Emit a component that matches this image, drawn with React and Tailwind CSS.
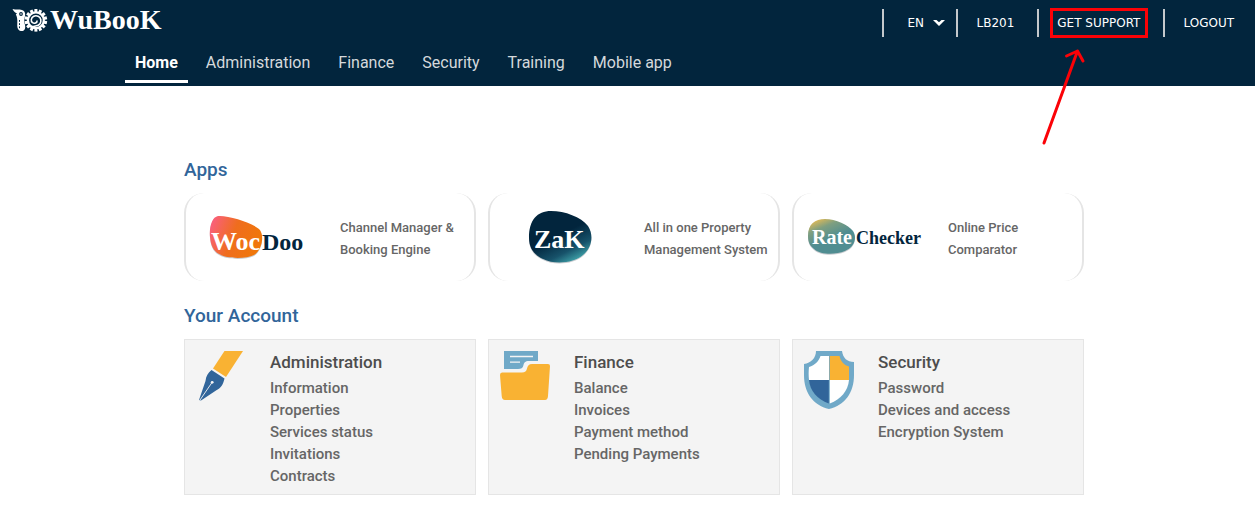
const NAV = ["Home", "Administration", "Finance", "Security", "Training", "Mobile app"];

const SERIF = "font-['Liberation_Serif',serif] font-bold";

function SnakeMark() {
  const teeth = Array.from({ length: 14 }, (_, i) => i * (360 / 14));
  return (
    <svg className="h-6 w-9 shrink-0" viewBox="0 0 36 24" fill="none" aria-hidden="true">
      <path d="M0.500 1 C4 2 7 1 10 2 C13 3 13.800 6 12.800 9 C12 12 12.200 14 13 17 C14 21 12 23.500 9 23 C5.500 22.500 5 19 5.300 15 C5.500 11 5 8.500 3.800 6.500 L5 5.500 C3 4.500 1.500 3 0.500 1Z" fill="#fff" />
      <circle cx="9" cy="6" r="1.900" fill="#02253d" />
      <circle cx="9" cy="6" r="0.800" fill="#fff" />
      <path d="M7.500 12v8.500" stroke="#02253d" strokeWidth="1" strokeDasharray="1.800 1.400" />
      <g fill="#fff">
        {teeth.map((a) => (
          <rect key={a} x="22.400" y="1" width="3" height="3.500" transform={`rotate(${a} 23.900 12.300)`} />
        ))}
      </g>
      <circle cx="23.900" cy="12.300" r="7.900" stroke="#fff" strokeWidth="2.200" />
      <path d="M15.500 17.500 C18 19 22 18.500 23.500 18 C28 17.500 29.300 14.500 28.800 11.500 C28.200 8.500 24.500 7 21.800 8.300 C19 9.700 18.500 13 20.500 14.700 C22.300 16 25.300 15 25.100 12.500" stroke="#fff" strokeWidth="1.600" />
    </svg>
  );
}

function WoodooLogo() {
  return (
    <svg className="h-13 w-24" viewBox="0 0 96 52" role="img" aria-label="WooDoo">
      <defs>
        <linearGradient id="woo" x1="0" y1="0.300" x2="1" y2="0.600">
          <stop offset="0" stopColor="#f9607a" />
          <stop offset="0.450" stopColor="#ef6d1e" />
          <stop offset="1" stopColor="#f07808" />
        </linearGradient>
      </defs>
      <path d="M1 27 C0 17 3 7 9 6 C18 5 42 12 50 19 C56 25 53 40 45 45 C37 49 18 49 10 44 C4 41 1.500 34 1 27Z" fill="#c9ccd0" />
      <path d="M1 26 C0 16 3 6 9 5 C18 4 42 11 50 18 C56 24 53 39 45 44 C37 48 18 48 10 43 C4 40 1.500 33 1 26Z" fill="url(#woo)" />
      <text x="2" y="39" fontSize="26" fill="#fff" className={SERIF}>Woc</text>
      <text x="53" y="39" fontSize="24" fill="#02253d" className={SERIF}>Doo</text>
    </svg>
  );
}

function ZakLogo() {
  return (
    <svg className="h-14 w-17" viewBox="0 0 68 56" role="img" aria-label="ZaK">
      <defs>
        <linearGradient id="zak" x1="0.300" y1="0.200" x2="0.800" y2="1">
          <stop offset="0.350" stopColor="#02253d" />
          <stop offset="0.700" stopColor="#17526a" />
          <stop offset="1" stopColor="#48b5b8" />
        </linearGradient>
      </defs>
      <path d="M2 30 C2 12 10 3 24 3 C38 3 54 9 61 18 C67 27 65 40 56 47 C47 55 28 57 16 51 C7 47 2 40 2 30Z" fill="#c9ccd0" />
      <path d="M2 29 C2 11 10 2 24 2 C38 2 54 8 61 17 C67 26 65 39 56 46 C47 54 28 56 16 50 C7 46 2 39 2 29Z" fill="url(#zak)" />
      <text x="7" y="39" fontSize="26" fill="#fff" className={SERIF}>ZaK</text>
    </svg>
  );
}

function RateLogo() {
  return (
    <svg className="h-10 w-[116px]" viewBox="0 0 116 40" role="img" aria-label="RateChecker">
      <defs>
        <linearGradient id="rate" x1="0.100" y1="0" x2="0.450" y2="0.600">
          <stop offset="0" stopColor="#f5c04e" />
          <stop offset="0.450" stopColor="#7f9f80" />
          <stop offset="1" stopColor="#508d91" />
        </linearGradient>
      </defs>
      <path d="M1 20 C1 8 8 3 18 3 C29 3 41 9 46 15 C51 23 46 32 38 35 C28 39 14 39 7 33 C3 30 1 26 1 20Z" fill="#c9ccd0" />
      <path d="M1 19 C1 7 8 2 18 2 C29 2 41 8 46 14 C51 22 46 31 38 34 C28 38 14 38 7 32 C3 29 1 25 1 19Z" fill="url(#rate)" />
      <text x="5" y="27" fontSize="20" fill="#fff" className={SERIF}>Rate</text>
      <text x="49" y="27" fontSize="18" fill="#02253d" className={SERIF}>Checker</text>
    </svg>
  );
}

function PenIcon() {
  return (
    <svg className="h-13 w-13" viewBox="0 0 52 52" aria-hidden="true">
      <path d="M29.500 1 H48 L31 27 L18 18.500Z" fill="#f9b233" />
      <path d="M16.500 20 L29.500 28.500 C28 35 26 38 21 40.500 L6 50.500 L4 50 L10.500 31 C11 26 13 23 16.500 20Z" fill="#31659a" />
      <path d="M5 50 L17 32.500" stroke="#f4f4f4" strokeWidth="0.900" />
      <circle cx="17.200" cy="32.300" r="1.400" fill="#f4f4f4" />
    </svg>
  );
}

function FolderIcon() {
  return (
    <svg className="h-13 w-13" viewBox="0 0 52 52" aria-hidden="true">
      <path d="M5 1 H39 V11 H30 C26 11 25 13 24.500 15 C24 18 22 19 19 19 H5Z" fill="#70a9c8" />
      <path d="M11 6.500h23M11 12.200h10" stroke="#f4f4f4" strokeWidth="1.300" />
      <path d="M3 22.500 H23 C26 22.500 27.500 21 28 18.500 C28.500 16 30 14 33 14 H49 Q51 14 51 16 L49 46 Q48.700 50 46 50 H6 Q3 50 2.700 46 L1 25 Q1 22.500 3 22.500Z" fill="#f9b233" />
    </svg>
  );
}

function ShieldIcon() {
  return (
    <svg className="h-15 w-13" viewBox="0 0 52 60" aria-hidden="true">
      <path d="M13 1 H39 C40 8 44 12 51 12 V25 C51 43 42 55 26 59 C10 55 1 43 1 25 V14 C8 13 13 8 13 1Z" fill="#70a9c8" />
      <path d="M17.500 6 H26 V30 H6 C5.500 26 5.500 21 6 17 C12 15 16 11 17.500 6Z" fill="#fff" />
      <path d="M26.800 6 H36.500 C37.500 11 40.500 15 46 16.500 V30 H26.800Z" fill="#f9b233" />
      <path d="M6 30 H25.800 V53.500 C14 49 7 41 6 30Z" fill="#31659a" />
      <path d="M26.800 30 H46 C45 41 38 49 26.800 53.500Z" fill="#fff" />
    </svg>
  );
}

const APPS = [
  { Logo: WoodooLogo, lines: ["Channel Manager &", "Booking Engine"] },
  { Logo: ZakLogo, lines: ["All in one Property", "Management System"] },
  { Logo: RateLogo, lines: ["Online Price", "Comparator"] },
];

const ACCOUNT = [
  { Icon: PenIcon, title: "Administration", items: ["Information", "Properties", "Services status", "Invitations", "Contracts"] },
  { Icon: FolderIcon, title: "Finance", items: ["Balance", "Invoices", "Payment method", "Pending Payments"] },
  { Icon: ShieldIcon, title: "Security", items: ["Password", "Devices and access", "Encryption System"] },
];

const TOP = "flex h-7 items-center border-l-2 border-[#c4c8cc] px-[18px]";

export default function App() {
  return (
    <div className="min-h-screen bg-white font-['Roboto',sans-serif] text-[#666]">
      <header className="bg-[#02253d]">
        <div className="flex items-start justify-between pr-[3px] pl-3">
          <a href="#" className="flex items-center gap-0.5 pt-1" aria-label="WuBooK">
            <SnakeMark />
            <span className="font-['Liberation_Serif',serif] text-[28px] leading-8 font-bold text-white">WuBooK</span>
          </a>
          <div className="flex gap-[5px] pt-[9px] font-['DejaVu_Sans',sans-serif] text-xs text-white">
            <div className="flex h-7 items-center border-l-2 border-[#c4c8cc] pr-[6px] pl-[23px]">
              <div className="grid items-center">
                <select aria-label="Language" className="col-start-1 row-start-1 h-5 w-[38px] appearance-none bg-transparent">
                  <option>EN</option>
                </select>
                <svg className="pointer-events-none col-start-1 row-start-1 h-2 w-3 justify-self-end" viewBox="0 0 12 8" aria-hidden="true">
                  <path d="M0 1 L3.500 1 L6 3.300 L8.500 1 L12 1 L6 7Z" fill="#fff" />
                </svg>
              </div>
            </div>
            <a href="#" className={TOP}>LB201</a>
            <div className="relative">
              <a href="#" className={TOP}>GET SUPPORT</a>
              <svg className="pointer-events-none absolute top-0 left-0 h-36 w-32 overflow-visible" viewBox="0 0 128 144" fill="none" stroke="#fb0207" aria-hidden="true">
                <rect x="14.500" y="0.500" width="95" height="27" strokeWidth="3" />
                <path d="M7 134 L40.500 42 M29.500 47 L40.500 42 L46 52" strokeWidth="3" strokeLinecap="round" strokeLinejoin="round" />
              </svg>
            </div>
            <a href="#" className={TOP}>LOGOUT</a>
          </div>
        </div>
        <nav className="flex h-[49px] gap-2 pl-[125px] text-base text-[#d5d9dc]">
          {NAV.map((n, i) => (
            <a
              key={n}
              href="#"
              aria-current={i === 0 ? "page" : undefined}
              className={i === 0 ? "mb-[3px] border-b-3 border-white px-[10px] pt-[14px] font-bold text-white" : "px-[10px] pt-[14px]"}
            >
              {n}
            </a>
          ))}
        </nav>
      </header>
      <main className="mr-[171px] ml-[184px] pt-[72px]">
        <h2 className="text-[19px] leading-6 font-medium text-[#31659a]">Apps</h2>
        <div className="mt-[11px] grid grid-cols-3 gap-3">
          {APPS.map(({ Logo, lines }) => (
            <a key={lines[0]} href="#" className="flex h-[88px] items-center rounded-[20px] border-x-2 border-[#e5e5e5]">
              <span className="flex w-[142px] shrink-0 justify-center"><Logo /></span>
              <span className="pt-1 pl-3 text-[13px] leading-[22px] font-medium">
                {lines[0]}<br />{lines[1]}
              </span>
            </a>
          ))}
        </div>
        <h2 className="mt-[23px] text-[19px] leading-6 font-medium text-[#31659a]">Your Account</h2>
        <div className="mt-[11px] grid grid-cols-3 gap-3">
          {ACCOUNT.map(({ Icon, title, items }) => (
            <section key={title} className="flex min-h-[156px] border border-[#e5e5e5] bg-[#f4f4f4] pt-[10px] pb-[7px]">
              <div className="w-[85px] shrink-0 pl-[10px]"><Icon /></div>
              <div>
                <h3 className="text-[17px] leading-6 font-medium text-[#4d4d4d]">{title}</h3>
                <ul className="pt-[3px] text-[15px] leading-[22px] font-medium">
                  {items.map((t) => (
                    <li key={t}><a href="#">{t}</a></li>
                  ))}
                </ul>
              </div>
            </section>
          ))}
        </div>
      </main>
    </div>
  );
}
